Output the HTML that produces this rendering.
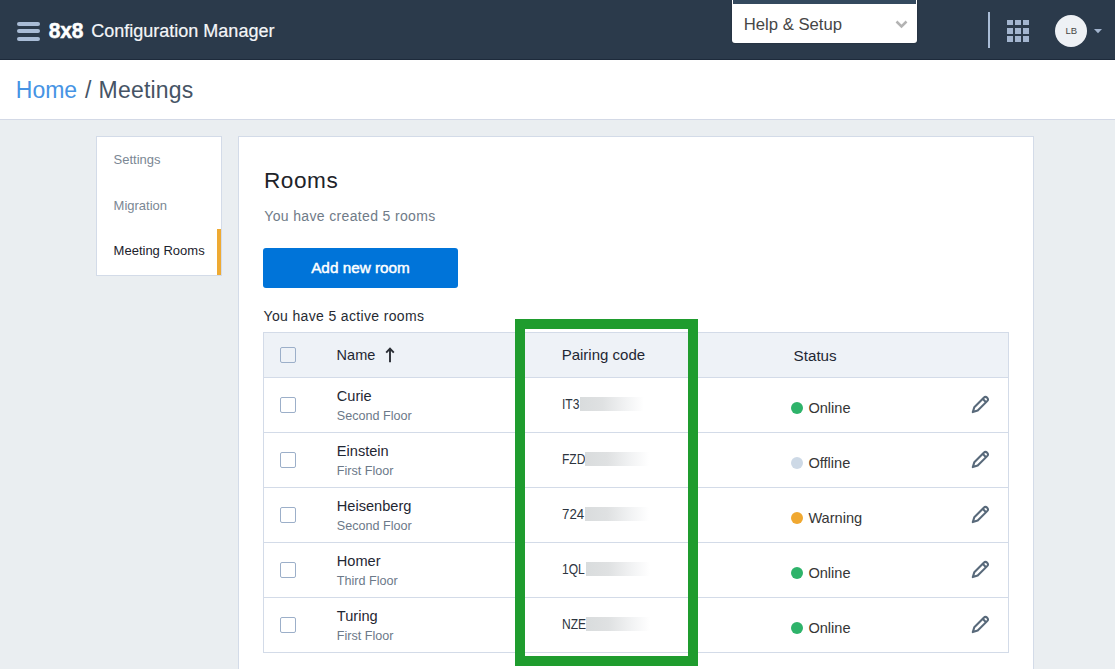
<!DOCTYPE html>
<html><head><meta charset="utf-8"><title>Meetings</title>
<style>
html,body{margin:0;padding:0;}
body{width:1115px;height:669px;overflow:hidden;position:relative;background:#eaeef1;font-family:"Liberation Sans",sans-serif;}
.t{position:absolute;white-space:nowrap;}
.b{position:absolute;}
</style></head><body>
<div class="b" style="left:0px;top:0px;width:1115px;height:60px;background:#2b3a4b;"></div>
<div class="b" style="left:0px;top:59px;width:1115px;height:1px;background:#1d2a3b;"></div>
<div class="b" style="left:17px;top:21.5px;width:23px;height:4.0px;background:#a9bcd6;border-radius:2px;"></div>
<div class="b" style="left:17px;top:29px;width:23px;height:4px;background:#a9bcd6;border-radius:2px;"></div>
<div class="b" style="left:17px;top:36.5px;width:23px;height:4.0px;background:#a9bcd6;border-radius:2px;"></div>
<div class="t" style="left:48.8px;top:20.32px;font-size:21px;line-height:21px;color:#ffffff;font-weight:700;letter-spacing:-0.2px;transform:scaleY(1.06);transform-origin:0 86%;-webkit-text-stroke:0.5px #fff;">8x8</div>
<div class="t" style="left:91.3px;top:21.76px;font-size:18px;line-height:18px;color:#f4f6f9;font-weight:400;-webkit-text-stroke:0.2px #f4f6f9;">Configuration Manager</div>
<div class="b" style="left:732px;top:0px;width:185px;height:43px;background:#ffffff;border-radius:0 0 3px 3px;box-shadow:0 0 2px rgba(0,0,0,0.35);"></div>
<div class="b" style="left:733px;top:0px;width:183px;height:4px;background:#34495e;"></div>
<div class="t" style="left:743.7px;top:16.86px;font-size:16.7px;line-height:16.7px;color:#464646;font-weight:400;">Help &amp; Setup</div>
<svg class="b" style="left:894px;top:19px" width="15" height="11" viewBox="0 0 15 11"><path d="M2.5 2.5 L7.5 7.5 L12.5 2.5" fill="none" stroke="#b3b3b3" stroke-width="2.5"/></svg>
<div class="b" style="left:988px;top:12px;width:2px;height:36px;background:#a9bcd6;"></div>
<div class="b" style="left:1007px;top:19.6px;width:6.2000000000000455px;height:5.800000000000001px;background:#a3b5cf;"></div>
<div class="b" style="left:1015px;top:19.6px;width:6.2000000000000455px;height:5.800000000000001px;background:#a3b5cf;"></div>
<div class="b" style="left:1023px;top:19.6px;width:6.2000000000000455px;height:5.800000000000001px;background:#a3b5cf;"></div>
<div class="b" style="left:1007px;top:27.8px;width:6.2000000000000455px;height:5.800000000000001px;background:#a3b5cf;"></div>
<div class="b" style="left:1015px;top:27.8px;width:6.2000000000000455px;height:5.800000000000001px;background:#a3b5cf;"></div>
<div class="b" style="left:1023px;top:27.8px;width:6.2000000000000455px;height:5.800000000000001px;background:#a3b5cf;"></div>
<div class="b" style="left:1007px;top:36.0px;width:6.2000000000000455px;height:5.799999999999997px;background:#a3b5cf;"></div>
<div class="b" style="left:1015px;top:36.0px;width:6.2000000000000455px;height:5.799999999999997px;background:#a3b5cf;"></div>
<div class="b" style="left:1023px;top:36.0px;width:6.2000000000000455px;height:5.799999999999997px;background:#a3b5cf;"></div>
<div class="b" style="left:1055px;top:15px;width:32px;height:32px;background:#eef1f5;border-radius:50%;"></div>
<div class="t" style="left:1065.4px;top:26.36px;font-size:9.5px;line-height:9.5px;color:#464646;font-weight:400;">LB</div>
<svg class="b" style="left:1093px;top:28px" width="10" height="6" viewBox="0 0 10 6"><path d="M1 1 L9 1 L5 5.2 Z" fill="#a3b5cf"/></svg>
<div class="b" style="left:0px;top:60px;width:1115px;height:59px;background:#ffffff;"></div>
<div class="b" style="left:0px;top:119px;width:1115px;height:1px;background:#d3d9e6;"></div>
<div class="b" style="left:0px;top:120px;width:1115px;height:549px;background:#eaeef1;"></div>
<div class="t" style="left:15.8px;top:78.73px;font-size:23px;line-height:23px;color:#4693e4;font-weight:400;">Home</div>
<div class="t" style="left:85px;top:78.73px;font-size:23px;line-height:23px;color:#465465;font-weight:400;">/</div>
<div class="t" style="left:98.6px;top:78.73px;font-size:23px;line-height:23px;color:#465465;font-weight:400;letter-spacing:0.2px;">Meetings</div>
<div class="b" style="left:96px;top:136px;width:126px;height:140px;background:#fff;border:1px solid #d3dbe8;box-sizing:border-box;"></div>
<div class="t" style="left:113.6px;top:152.80px;font-size:13px;line-height:13px;color:#7b8794;font-weight:400;">Settings</div>
<div class="t" style="left:113.6px;top:198.70px;font-size:13px;line-height:13px;color:#7b8794;font-weight:400;">Migration</div>
<div class="t" style="left:113.6px;top:244.40px;font-size:13px;line-height:13px;color:#1b222c;font-weight:400;">Meeting Rooms</div>
<div class="b" style="left:217px;top:229px;width:4px;height:46px;background:#eeaa33;"></div>
<div class="b" style="left:238px;top:136px;width:796px;height:564px;background:#fff;border:1px solid #d3dbe8;box-sizing:border-box;"></div>
<div class="t" style="left:264.0px;top:170.27px;font-size:22.6px;line-height:22.6px;color:#1e2329;font-weight:400;letter-spacing:0.55px;">Rooms</div>
<div class="t" style="left:264.3px;top:208.75px;font-size:14px;line-height:14px;color:#6f7b88;font-weight:400;letter-spacing:0.35px;">You have created 5 rooms</div>
<div class="b" style="left:263px;top:248px;width:195px;height:40px;background:#0074d9;border-radius:3px;"></div>
<div class="t" style="left:263px;width:195px;text-align:center;top:260.35px;font-size:15.3px;line-height:15.3px;color:#fff;font-weight:400;-webkit-text-stroke:0.45px #fff;">Add new room</div>
<div class="t" style="left:263.5px;top:308.75px;font-size:14px;line-height:14px;color:#262b33;font-weight:400;letter-spacing:0.35px;">You have 5 active rooms</div>
<div class="b" style="left:263px;top:332px;width:746px;height:321px;background:#fff;border:1px solid #d3dbe8;box-sizing:border-box;"></div>
<div class="b" style="left:264px;top:333px;width:744px;height:44px;background:#eef2f7;"></div>
<div class="b" style="left:264px;top:377px;width:744px;height:1px;background:#d3dbe8;"></div>
<div class="b" style="left:264px;top:432px;width:744px;height:1px;background:#d3dbe8;"></div>
<div class="b" style="left:264px;top:487px;width:744px;height:1px;background:#d3dbe8;"></div>
<div class="b" style="left:264px;top:542px;width:744px;height:1px;background:#d3dbe8;"></div>
<div class="b" style="left:264px;top:597px;width:744px;height:1px;background:#d3dbe8;"></div>
<div class="b" style="left:280px;top:347px;width:16px;height:16px;border:1.5px solid #9cafc9;border-radius:2px;box-sizing:border-box;"></div>
<div class="t" style="left:336.6px;top:347.63px;font-size:14.5px;line-height:14.5px;color:#1f2733;font-weight:400;">Name</div>
<svg class="b" style="left:384px;top:346px" width="12" height="18" viewBox="0 0 12 18"><path d="M6 2.8 L6 16.2 M2.2 6.6 L6 2.6 L9.8 6.6" fill="none" stroke="#2b2f36" stroke-width="1.9"/></svg>
<div class="t" style="left:561.7px;top:347.20px;font-size:15px;line-height:15px;color:#1f2733;font-weight:400;">Pairing code</div>
<div class="t" style="left:793.6px;top:348.03px;font-size:15.2px;line-height:15.2px;color:#1f2733;font-weight:400;">Status</div>
<div class="b" style="left:280px;top:397px;width:16px;height:16px;border:1.5px solid #9cafc9;border-radius:2px;box-sizing:border-box;"></div>
<div class="t" style="left:336.8px;top:388.64px;font-size:14.6px;line-height:14.6px;color:#1f2733;font-weight:400;">Curie</div>
<div class="t" style="left:336.8px;top:409.73px;font-size:12.6px;line-height:12.6px;color:#6c7989;font-weight:400;">Second Floor</div>
<div class="t" style="left:561.6px;top:397.15px;font-size:14px;line-height:14px;color:#2d3540;font-weight:400;transform:scaleX(0.86);transform-origin:0 0;">IT3</div>
<div class="b" style="left:580px;top:397px;width:64px;height:13.600000000000023px;background:linear-gradient(to right,#d9dcdd 0%,#dfe1e2 35%,#f2f3f4 72%,#ffffff 100%);"></div>
<div class="b" style="left:791px;top:402px;width:12px;height:12px;background:#2eb36a;border-radius:50%;"></div>
<div class="t" style="left:808.4px;top:401.34px;font-size:14.6px;line-height:14.6px;color:#363636;font-weight:400;">Online</div>
<svg class="b" style="left:971px;top:395px" width="19" height="19" viewBox="0 0 19 19"><g transform="translate(1.6,17.3) rotate(-45)" fill="none" stroke="#58697a" stroke-width="2.1" stroke-linejoin="round"><path d="M0.3 0 L4.8 -2.4 L18.2 -2.4 Q20.6 -2.4 20.6 0 Q20.6 2.4 18.2 2.4 L4.8 2.4 Z"/><path d="M16.6 -2.4 L16.6 2.4"/></g></svg>
<div class="b" style="left:280px;top:452px;width:16px;height:16px;border:1.5px solid #9cafc9;border-radius:2px;box-sizing:border-box;"></div>
<div class="t" style="left:336.8px;top:443.64px;font-size:14.6px;line-height:14.6px;color:#1f2733;font-weight:400;">Einstein</div>
<div class="t" style="left:336.8px;top:464.73px;font-size:12.6px;line-height:12.6px;color:#6c7989;font-weight:400;">First Floor</div>
<div class="t" style="left:561.6px;top:452.15px;font-size:14px;line-height:14px;color:#2d3540;font-weight:400;transform:scaleX(0.86);transform-origin:0 0;">FZD</div>
<div class="b" style="left:585px;top:452px;width:64px;height:13.600000000000023px;background:linear-gradient(to right,#d9dcdd 0%,#dfe1e2 35%,#f2f3f4 72%,#ffffff 100%);"></div>
<div class="b" style="left:791px;top:457px;width:12px;height:12px;background:#cdd9e6;border-radius:50%;"></div>
<div class="t" style="left:808.4px;top:456.34px;font-size:14.6px;line-height:14.6px;color:#363636;font-weight:400;">Offline</div>
<svg class="b" style="left:971px;top:450px" width="19" height="19" viewBox="0 0 19 19"><g transform="translate(1.6,17.3) rotate(-45)" fill="none" stroke="#58697a" stroke-width="2.1" stroke-linejoin="round"><path d="M0.3 0 L4.8 -2.4 L18.2 -2.4 Q20.6 -2.4 20.6 0 Q20.6 2.4 18.2 2.4 L4.8 2.4 Z"/><path d="M16.6 -2.4 L16.6 2.4"/></g></svg>
<div class="b" style="left:280px;top:507px;width:16px;height:16px;border:1.5px solid #9cafc9;border-radius:2px;box-sizing:border-box;"></div>
<div class="t" style="left:336.8px;top:498.64px;font-size:14.6px;line-height:14.6px;color:#1f2733;font-weight:400;">Heisenberg</div>
<div class="t" style="left:336.8px;top:519.73px;font-size:12.6px;line-height:12.6px;color:#6c7989;font-weight:400;">Second Floor</div>
<div class="t" style="left:561.6px;top:507.15px;font-size:14px;line-height:14px;color:#2d3540;font-weight:400;transform:scaleX(0.95);transform-origin:0 0;">724</div>
<div class="b" style="left:585px;top:507px;width:64px;height:13.600000000000023px;background:linear-gradient(to right,#d9dcdd 0%,#dfe1e2 35%,#f2f3f4 72%,#ffffff 100%);"></div>
<div class="b" style="left:791px;top:512px;width:12px;height:12px;background:#f0a830;border-radius:50%;"></div>
<div class="t" style="left:808.4px;top:511.34px;font-size:14.6px;line-height:14.6px;color:#363636;font-weight:400;">Warning</div>
<svg class="b" style="left:971px;top:505px" width="19" height="19" viewBox="0 0 19 19"><g transform="translate(1.6,17.3) rotate(-45)" fill="none" stroke="#58697a" stroke-width="2.1" stroke-linejoin="round"><path d="M0.3 0 L4.8 -2.4 L18.2 -2.4 Q20.6 -2.4 20.6 0 Q20.6 2.4 18.2 2.4 L4.8 2.4 Z"/><path d="M16.6 -2.4 L16.6 2.4"/></g></svg>
<div class="b" style="left:280px;top:562px;width:16px;height:16px;border:1.5px solid #9cafc9;border-radius:2px;box-sizing:border-box;"></div>
<div class="t" style="left:336.8px;top:553.64px;font-size:14.6px;line-height:14.6px;color:#1f2733;font-weight:400;">Homer</div>
<div class="t" style="left:336.8px;top:574.73px;font-size:12.6px;line-height:12.6px;color:#6c7989;font-weight:400;">Third Floor</div>
<div class="t" style="left:561.6px;top:562.15px;font-size:14px;line-height:14px;color:#2d3540;font-weight:400;transform:scaleX(0.86);transform-origin:0 0;">1QL</div>
<div class="b" style="left:586px;top:562px;width:64px;height:13.600000000000023px;background:linear-gradient(to right,#d9dcdd 0%,#dfe1e2 35%,#f2f3f4 72%,#ffffff 100%);"></div>
<div class="b" style="left:791px;top:567px;width:12px;height:12px;background:#2eb36a;border-radius:50%;"></div>
<div class="t" style="left:808.4px;top:566.34px;font-size:14.6px;line-height:14.6px;color:#363636;font-weight:400;">Online</div>
<svg class="b" style="left:971px;top:560px" width="19" height="19" viewBox="0 0 19 19"><g transform="translate(1.6,17.3) rotate(-45)" fill="none" stroke="#58697a" stroke-width="2.1" stroke-linejoin="round"><path d="M0.3 0 L4.8 -2.4 L18.2 -2.4 Q20.6 -2.4 20.6 0 Q20.6 2.4 18.2 2.4 L4.8 2.4 Z"/><path d="M16.6 -2.4 L16.6 2.4"/></g></svg>
<div class="b" style="left:280px;top:617px;width:16px;height:16px;border:1.5px solid #9cafc9;border-radius:2px;box-sizing:border-box;"></div>
<div class="t" style="left:336.8px;top:608.64px;font-size:14.6px;line-height:14.6px;color:#1f2733;font-weight:400;">Turing</div>
<div class="t" style="left:336.8px;top:629.73px;font-size:12.6px;line-height:12.6px;color:#6c7989;font-weight:400;">First Floor</div>
<div class="t" style="left:561.6px;top:617.15px;font-size:14px;line-height:14px;color:#2d3540;font-weight:400;transform:scaleX(0.86);transform-origin:0 0;">NZE</div>
<div class="b" style="left:586px;top:617px;width:64px;height:13.600000000000023px;background:linear-gradient(to right,#d9dcdd 0%,#dfe1e2 35%,#f2f3f4 72%,#ffffff 100%);"></div>
<div class="b" style="left:791px;top:622px;width:12px;height:12px;background:#2eb36a;border-radius:50%;"></div>
<div class="t" style="left:808.4px;top:621.34px;font-size:14.6px;line-height:14.6px;color:#363636;font-weight:400;">Online</div>
<svg class="b" style="left:971px;top:615px" width="19" height="19" viewBox="0 0 19 19"><g transform="translate(1.6,17.3) rotate(-45)" fill="none" stroke="#58697a" stroke-width="2.1" stroke-linejoin="round"><path d="M0.3 0 L4.8 -2.4 L18.2 -2.4 Q20.6 -2.4 20.6 0 Q20.6 2.4 18.2 2.4 L4.8 2.4 Z"/><path d="M16.6 -2.4 L16.6 2.4"/></g></svg>
<div class="b" style="left:515px;top:319px;width:183px;height:347px;border:10px solid #1f9c2e;box-sizing:border-box;"></div>
</body></html>
